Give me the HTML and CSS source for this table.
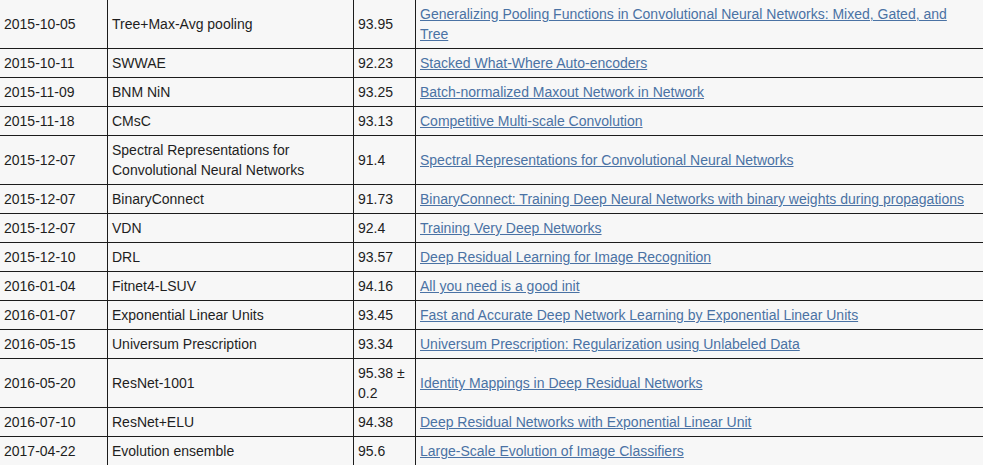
FILE: index.html
```html
<!DOCTYPE html>
<html>
<head>
<meta charset="utf-8">
<link rel="stylesheet" href="styles.css">
</head>
<body>
<table class="results">
  <colgroup>
    <col class="c-date">
    <col class="c-name">
    <col class="c-acc">
    <col class="c-paper">
  </colgroup>
  <tbody>
    <tr><td>2015-10-05</td><td>Tree+Max-Avg pooling</td><td>93.95</td><td class="paper"><a href="#">Generalizing Pooling Functions in Convolutional Neural Networks: Mixed, Gated, and Tree</a></td></tr>
    <tr><td>2015-10-11</td><td>SWWAE</td><td>92.23</td><td class="paper"><a href="#">Stacked What-Where Auto-encoders</a></td></tr>
    <tr><td>2015-11-09</td><td>BNM NiN</td><td>93.25</td><td class="paper"><a href="#">Batch-normalized Maxout Network in Network</a></td></tr>
    <tr><td>2015-11-18</td><td>CMsC</td><td>93.13</td><td class="paper"><a href="#">Competitive Multi-scale Convolution</a></td></tr>
    <tr><td>2015-12-07</td><td>Spectral Representations for Convolutional Neural Networks</td><td>91.4</td><td class="paper"><a href="#">Spectral Representations for Convolutional Neural Networks</a></td></tr>
    <tr><td>2015-12-07</td><td>BinaryConnect</td><td>91.73</td><td class="paper"><a href="#">BinaryConnect: Training Deep Neural Networks with binary weights during propagations</a></td></tr>
    <tr><td>2015-12-07</td><td>VDN</td><td>92.4</td><td class="paper"><a href="#">Training Very Deep Networks</a></td></tr>
    <tr><td>2015-12-10</td><td>DRL</td><td>93.57</td><td class="paper"><a href="#">Deep Residual Learning for Image Recognition</a></td></tr>
    <tr><td>2016-01-04</td><td>Fitnet4-LSUV</td><td>94.16</td><td class="paper"><a href="#">All you need is a good init</a></td></tr>
    <tr><td>2016-01-07</td><td>Exponential Linear Units</td><td>93.45</td><td class="paper"><a href="#">Fast and Accurate Deep Network Learning by Exponential Linear Units</a></td></tr>
    <tr><td>2016-05-15</td><td>Universum Prescription</td><td>93.34</td><td class="paper"><a href="#">Universum Prescription: Regularization using Unlabeled Data</a></td></tr>
    <tr><td>2016-05-20</td><td>ResNet-1001</td><td>95.38 ± 0.2</td><td class="paper"><a href="#">Identity Mappings in Deep Residual Networks</a></td></tr>
    <tr><td>2016-07-10</td><td>ResNet+ELU</td><td>94.38</td><td class="paper"><a href="#">Deep Residual Networks with Exponential Linear Unit</a></td></tr>
    <tr><td>2017-04-22</td><td>Evolution ensemble</td><td>95.6</td><td class="paper"><a href="#">Large-Scale Evolution of Image Classifiers</a></td></tr>
  </tbody>
</table>
</body>
</html>
```

FILE: styles.css
```css
html, body {
  margin: 0;
  padding: 0;
  background: #f7f7f7;
}
body {
  font-family: "Liberation Sans", Arial, Helvetica, sans-serif;
  font-size: 14px;
  color: #1e1e1e;
  overflow: hidden;
}
.results {
  border-collapse: collapse;
  table-layout: fixed;
  width: 986px;
  margin: -1px 0 0 -1px;
}
.c-date { width: 108px; }
.c-name { width: 246px; }
.c-acc { width: 62px; }
.c-paper { width: 570px; }
.results td {
  border: 1px solid #1c1c1c;
  padding: 4px 4px;
  line-height: 20px;
  vertical-align: middle;
  background: #f7f7f7;
}
.results td.paper {
  padding-right: 14px;
}
.results a {
  color: #4a72a4;
  text-decoration: underline;
}
```
